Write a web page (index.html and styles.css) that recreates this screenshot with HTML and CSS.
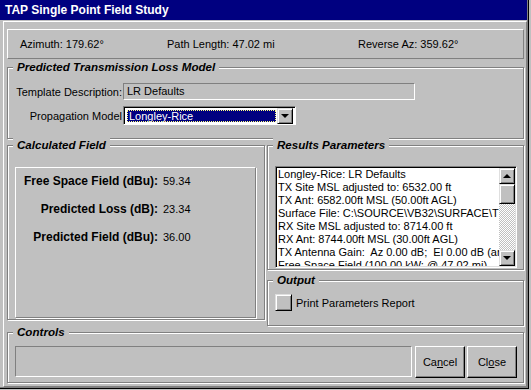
FILE: index.html
```html
<!DOCTYPE html>
<html lang="en">
<head>
  <meta charset="UTF-8" />
  <title>TAP Single Point Field Study</title>
  <link rel="stylesheet" href="styles.css">
</head>
<body>
  <div class="window">
    <div class="titlebar">TAP Single Point Field Study</div>
    <div class="form">
      <div class="info">
        <span>Azimuth: 179.62°</span>
        <span>Path Length: 47.02 mi</span>
        <span>Reverse Az: 359.62°</span>
      </div>

      <div class="group tlm">
        <div class="group-title">Predicted Transmission Loss Model</div>
        <div class="fields">
          <label>Template Description:</label>
          <div class="textbox">LR Defaults</div>
          <label>Propagation Model</label>
          <div class="combo">
            <div class="combo-value"><span>Longley-Rice</span></div>
            <div class="sb-btn combo-btn"><span class="arrow-down"></span></div>
          </div>
        </div>
      </div>

      <div class="middle">
        <div class="group calc">
          <div class="group-title">Calculated Field</div>
          <div class="calc-box">
            <div class="calc-label">Free Space Field (dBu):</div><div>59.34</div>
            <div class="calc-label">Predicted Loss (dB):</div><div>23.34</div>
            <div class="calc-label">Predicted Field (dBu):</div><div>36.00</div>
          </div>
        </div>

        <div class="right-col">
          <div class="group results">
            <div class="group-title">Results Parameters</div>
            <div class="listbox">
              <div class="list-lines">
                <div>Longley-Rice: LR Defaults</div>
                <div>TX Site MSL adjusted to: 6532.00 ft</div>
                <div>TX Ant: 6582.00ft MSL (50.00ft AGL)</div>
                <div>Surface File: C:\SOURCE\VB32\SURFACE\TEST.SRF</div>
                <div>RX Site MSL adjusted to: 8714.00 ft</div>
                <div>RX Ant: 8744.00ft MSL (30.00ft AGL)</div>
                <div>TX Antenna Gain:&nbsp; Az 0.00 dB;&nbsp; El 0.00 dB (angle)</div>
                <div>Free Space Field (100.00 kW; @ 47.02 mi)</div>
              </div>
              <div class="vscroll">
                <div class="sb-btn"><span class="arrow-up"></span></div>
                <div class="sb-thumb"></div>
                <div class="sb-track"></div>
                <div class="sb-btn"><span class="arrow-down"></span></div>
              </div>
            </div>
          </div>

          <div class="group output">
            <div class="group-title">Output</div>
            <div class="check-row">
              <span class="toggle"></span>
              <span>Print Parameters Report</span>
            </div>
          </div>
        </div>
      </div>

      <div class="group controls">
        <div class="group-title">Controls</div>
        <div class="controls-row">
          <div class="status"></div>
          <button class="btn">Ca<u>n</u>cel</button>
          <button class="btn">Cl<u>o</u>se</button>
        </div>
      </div>
    </div>
  </div>
</body>
</html>
```

FILE: styles.css
```css
body {
  margin: 0;
  background: #c0c0c0;
  font-family: "Liberation Sans", Arial, sans-serif;
  font-size: 11px;
  color: #000;
}
.window {
  width: 529px;
  height: 389px;
  box-sizing: border-box;
  border-right: 1px solid #000;
  border-bottom: 1px solid #000;
  box-shadow: inset -1px -1px #808080;
  display: flex;
  flex-direction: column;
}
.titlebar {
  height: 20px;
  margin-right: 1px;
  padding-left: 5px;
  background: #000080;
  color: #fff;
  font-weight: bold;
  font-size: 12px;
  line-height: 20px;
}
.form {
  flex: 1;
  margin: 1px 1px 1px 3px;
  padding: 7px 2px 3px 3px;
  border: 1px solid;
  border-color: #fff #808080 #808080 #fff;
  display: flex;
  flex-direction: column;
}

/* raised info strip */
.info {
  height: 30px;
  box-sizing: border-box;
  padding-left: 12px;
  border: 1px solid;
  border-color: #fff #808080 #808080 #fff;
  display: grid;
  grid-template-columns: 147px 191px 1fr;
  align-items: center;
}

/* etched group frames */
.group {
  box-sizing: border-box;
  border: 1px solid #808080;
  box-shadow: inset 1px 1px #fff, 1px 1px #fff;
}
.group-title {
  display: table;
  margin: -8px 0 0 5px;
  padding: 0 4px;
  background: #c0c0c0;
  font-weight: bold;
  font-style: italic;
  font-size: 11.6px;
  line-height: 14px;
}

.tlm {
  margin-top: 8px;
  height: 72px;
}
.fields {
  margin-top: 9px;
  display: grid;
  grid-template-columns: 114px 292px;
  column-gap: 1px;
  row-gap: 6px;
  align-items: center;
}
.fields label {
  text-align: right;
}
.textbox {
  height: 17px;
  box-sizing: border-box;
  padding-left: 3px;
  border: 1px solid;
  border-color: #808080 #fff #fff #808080;
  line-height: 15px;
}
.combo {
  width: 173px;
  height: 19px;
  box-sizing: border-box;
  padding: 2px;
  border: 1px solid;
  border-color: #808080 #fff #fff #808080;
  box-shadow: inset 1px 1px #000;
  background: #fff;
  display: flex;
  gap: 1px;
}
.combo-value {
  flex: 1;
  margin: 1px 0 0 1px;
  background: #000080;
  color: #fff;
  outline: 1px dotted #ffff80;
  outline-offset: -1px;
  line-height: 12px;
  padding-left: 2px;
}
.combo-btn {
  margin-top: -1px;
  height: 16px;
}

.middle {
  margin-top: 6px;
  display: grid;
  grid-template-columns: 258px 257px;
  column-gap: 2px;
  align-items: start;
}
.calc {
  height: 175px;
}
.calc-box {
  margin: 15px 8px 0 7px;
  height: 151px;
  box-sizing: border-box;
  padding-top: 6px;
  border: 1px solid;
  border-color: #fff #808080 #808080 #fff;
  box-shadow: 1px 1px #fff;
  display: grid;
  grid-template-columns: 142px auto;
  column-gap: 5px;
  row-gap: 14px;
  align-content: start;
  line-height: 14px;
}
.calc-label {
  text-align: right;
  font-weight: bold;
  font-size: 12px;
}

.results {
  height: 125px;
}
.listbox {
  margin: 14px 6px 0 7px;
  height: 102px;
  box-sizing: border-box;
  border: 1px solid;
  border-color: #808080 #fff #fff #808080;
  box-shadow: inset 1px 1px #000, inset -1px -1px #dfdfdf;
  padding: 1px;
  background: #fff;
  display: flex;
}
.list-lines {
  flex: 1;
  overflow: hidden;
  padding-left: 1px;
  white-space: nowrap;
  line-height: 13px;
}
.vscroll {
  width: 16px;
  display: flex;
  flex-direction: column;
}
.sb-btn,
.sb-thumb,
.toggle {
  box-sizing: border-box;
  background: #c0c0c0;
  border: 1px solid;
  border-color: #dfdfdf #000 #000 #dfdfdf;
  box-shadow: inset 1px 1px #fff, inset -1px -1px #808080;
}
.sb-btn {
  width: 16px;
  height: 16px;
  display: flex;
  align-items: center;
  justify-content: center;
}
.sb-thumb {
  height: 20px;
}
.sb-track {
  flex: 1;
  background: repeating-conic-gradient(#fff 0 25%, #c0c0c0 0 50%) 0 0 / 2px 2px;
}
.arrow-up,
.arrow-down {
  width: 0;
  height: 0;
  border-left: 4px solid transparent;
  border-right: 4px solid transparent;
}
.arrow-up {
  border-bottom: 4px solid #000;
}
.arrow-down {
  border-top: 4px solid #000;
}

.output {
  margin-top: 10px;
  height: 46px;
}
.check-row {
  margin: 7px 0 0 7px;
  display: flex;
  align-items: center;
  gap: 4px;
}
.toggle {
  width: 17px;
  height: 17px;
}

.controls {
  margin-top: 6px;
  flex: 1;
}
.controls-row {
  margin: 7px 0 0 7px;
  display: flex;
  align-items: start;
  gap: 2px;
}
.status {
  width: 397px;
  height: 31px;
  margin-right: 1px;
  box-sizing: border-box;
  border: 1px solid;
  border-color: #808080 #fff #fff #808080;
}
.btn {
  width: 50px;
  height: 32px;
  padding: 0;
  background: #c0c0c0;
  border: 1px solid;
  border-color: #fff #000 #000 #fff;
  box-shadow: inset -1px -1px #808080;
  font-family: inherit;
  font-size: 11px;
  color: #000;
}
```
